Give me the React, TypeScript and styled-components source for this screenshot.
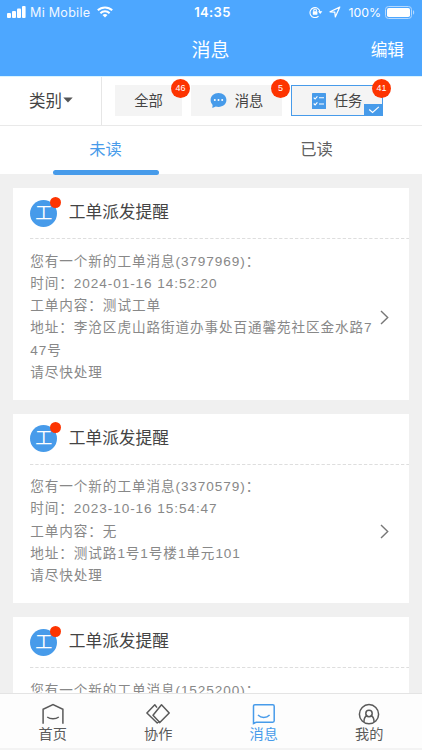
import React from "react";
import styled, { createGlobalStyle } from "styled-components";

const Global = createGlobalStyle`
  * { box-sizing: border-box; }
  body {
    margin: 0;
    background: #f0f0f0;
    font-family: "Liberation Sans", "Noto Sans CJK SC", sans-serif;
  }
`;

const blue = "#479bea";

const Screen = styled.div`
  width: 422px;
  height: 750px;
  display: flex;
  flex-direction: column;
  overflow: hidden;
  background: #f0f0f0;
`;

const Header = styled.header`
  flex: none;
  height: 76px;
  background: #4da7ff;
  color: #fff;
`;

const StatusBar = styled.div`
  height: 24px;
  display: grid;
  grid-template-columns: 1fr auto 1fr;
  align-items: center;
  padding: 0 7px;
  font-family: Inter, "Liberation Sans", sans-serif;
  font-size: 12.3px;
`;

const StatusSide = styled.div<{ $end?: boolean }>`
  display: flex;
  align-items: center;
  justify-content: ${(p) => (p.$end ? "flex-end" : "flex-start")};
`;

const Carrier = styled.span`
  margin: 0 7px 0 4px;
  font-size: 12.6px;
  letter-spacing: 0.25px;
  opacity: 0.92;
`;

const Clock = styled.span`
  font-size: 13px;
  font-weight: 600;
  letter-spacing: 0.35px;
  padding: 0 0 1px 3px;
`;

const Percent = styled.span`
  margin: 0 4px 0 7px;
`;

const TitleBar = styled.div`
  height: 52px;
  display: grid;
  grid-template-columns: 1fr auto 1fr;
  align-items: center;
  padding-right: 18px;
`;

const PageTitle = styled.h1`
  grid-column: 2;
  margin: 1px 0 0 17px;
  font-size: 19px;
  font-weight: 400;
  line-height: 28px;
`;

const EditButton = styled.button`
  justify-self: end;
  border: 0;
  padding: 0;
  margin-top: 1px;
  background: none;
  color: inherit;
  font: inherit;
  font-size: 16.7px;
  line-height: 24px;
`;

const FilterBar = styled.div`
  flex: none;
  height: 50px;
  display: flex;
  background: #fff;
  border-top: 1px solid #d9f4ff;
  border-bottom: 1px solid #e9e9e9;
`;

const Category = styled.div`
  width: 102px;
  display: flex;
  align-items: center;
  gap: 1px;
  padding: 0 0 2px 29px;
  border-right: 1px solid #e6e6e6;
  font-size: 16.5px;
  color: #444;
`;

const Chips = styled.div`
  display: flex;
  align-items: flex-start;
  gap: 9px;
  padding: 8px 0 0 13px;
`;

const Chip = styled.div<{ $width: number; $active?: boolean }>`
  position: relative;
  width: ${(p) => p.$width}px;
  height: 31px;
  display: flex;
  align-items: center;
  justify-content: center;
  background: #f4f4f4;
  border: 1px solid ${(p) => (p.$active ? blue : "#f4f4f4")};
  font-size: 14.3px;
  color: #444;
`;

const ChipLabel = styled.span`
  padding-bottom: 3px;
  svg + & { margin-left: 8px; }
`;

const CountBadge = styled.b`
  position: absolute;
  top: -7px;
  right: -9px;
  width: 19px;
  height: 19px;
  border-radius: 50%;
  background: #fd3401;
  color: #fff;
  font-size: 9px;
  font-weight: 400;
  line-height: 19px;
  text-align: center;
`;

const Corner = styled.i`
  position: absolute;
  right: -1px;
  bottom: -1px;
  width: 19px;
  height: 12px;
  display: flex;
  align-items: center;
  justify-content: center;
  background: ${blue};
`;

const Tabs = styled.div`
  flex: none;
  height: 48px;
  display: grid;
  grid-template-columns: 1fr 1fr;
  background: #fff;
`;

const Tab = styled.div<{ $active?: boolean }>`
  position: relative;
  display: flex;
  align-items: center;
  justify-content: center;
  padding-bottom: 4px;
  font-size: 16.3px;
  color: ${(p) => (p.$active ? blue : "#606060")};
`;

const Indicator = styled.i`
  position: absolute;
  left: 53px;
  bottom: -1px;
  width: 106px;
  height: 5px;
  border-radius: 3px;
  background: ${blue};
`;

const List = styled.main`
  flex: 1;
  min-height: 0;
  overflow: hidden;
  display: flex;
  flex-direction: column;
  gap: 13.7px;
  padding: 14px 13.3px 0;
`;

const Card = styled.article`
  flex: none;
  padding-left: 17px;
  background: #fff;
`;

const CardHead = styled.div`
  height: 50px;
  display: flex;
  align-items: center;
  gap: 11.5px;
`;

const Avatar = styled.div`
  position: relative;
  width: 27px;
  height: 27px;
  border-radius: 50%;
  background: ${blue};
  color: #fff;
  font-size: 17px;
  font-weight: 400;
  line-height: 27px;
  text-align: center;
`;

const UnreadDot = styled.i`
  position: absolute;
  top: -3px;
  right: -4px;
  width: 11px;
  height: 11px;
  border-radius: 50%;
  background: #fd3401;
`;

const CardTitle = styled.h2`
  margin: 0;
  font-size: 16.7px;
  line-height: 24px;
  font-weight: 400;
  color: #444;
`;

const CardBody = styled.div`
  display: flex;
  align-items: center;
  justify-content: space-between;
  padding: 11.5px 20px 16px 0;
`;

const Dashes = styled.svg`
  display: block;
  width: 100%;
  height: 1px;
`;

const Lines = styled.div`
  width: 346px;
  font-size: 13.6px;
  letter-spacing: 0.92px;
  line-height: 22.25px;
  color: #888;
`;

const Line = styled.p`
  margin: 0;
  word-break: break-all;
`;

const BottomNav = styled.nav`
  flex: none;
  height: 57px;
  display: grid;
  grid-template-columns: repeat(4, 1fr);
  background: #fdfdfd;
  border-top: 1px solid #e4e4e4;
  box-shadow: inset 0 -2px 0 #f3f3f3;
`;

const NavItem = styled.a<{ $active?: boolean }>`
  display: flex;
  flex-direction: column;
  align-items: center;
  padding-top: 9px;
  font-size: 14.2px;
  line-height: 18px;
  color: ${(p) => (p.$active ? blue : "#5a5a5a")};
`;

const Signal = () => (
  <svg width="19" height="12" viewBox="0 0 19 12" fill="#fff">
    <rect x="0" y="7" width="4" height="5" rx="1" />
    <rect x="5" y="5" width="4" height="7" rx="1" />
    <rect x="10" y="2.5" width="4" height="9.5" rx="1" />
    <rect x="15" y="0" width="3.6" height="12" rx="1" />
  </svg>
);

const Wifi = () => (
  <svg width="16" height="12" viewBox="0 0 16 12" fill="none" stroke="#fff" strokeWidth="2">
    <path d="M.8 4.3a10.4 10.4 0 0 1 14.4 0M3.4 7.2a6.6 6.6 0 0 1 9.2 0" />
    <path d="M8 11.6 5.5 9.1a3.6 3.6 0 0 1 5 0Z" fill="#fff" stroke="none" />
  </svg>
);

const LockIcon = styled.svg`
  margin-right: 6px;
`;

const RotationLock = () => (
  <LockIcon width="14" height="12" viewBox="0 0 14 12" fill="none" stroke="#fff" strokeWidth="1.1">
    <path d="M9.5 10.2A5 5 0 1 1 11 6" />
    <path d="M9 5.3h4.4L11.2 8Z" fill="#fff" stroke="none" />
    <rect x="3.8" y="5.2" width="4.6" height="3.6" rx=".5" fill="#fff" stroke="none" />
    <path d="M4.8 5.500V4.300a1.300 1.300 0 0 1 2.600 0v1.200" />
  </LockIcon>
);

const Location = () => (
  <svg width="12" height="12" viewBox="0 0 12 12" fill="none" stroke="#fff" strokeWidth="1.2" strokeLinejoin="round">
    <path d="M10.8 1.1 1 5.8l4.8.4.5 4.8Z" />
  </svg>
);

const Battery = () => (
  <svg width="30" height="13" viewBox="0 0 30 13">
    <rect x=".5" y=".5" width="26" height="12" rx="3" fill="none" stroke="#b4d9ff" />
    <rect x="2" y="2" width="23" height="9" rx="1.8" fill="#fff" />
    <path d="M28 4.3c1.6.6 1.6 3.8 0 4.4Z" fill="#b4d9ff" />
  </svg>
);

const Caret = () => (
  <svg width="10" height="6" viewBox="0 0 10 6">
    <path d="M.3.5h9.4L5 5.6Z" fill="#555" />
  </svg>
);

const Bubble = () => (
  <svg width="17" height="17" viewBox="0 0 17 17">
    <path d="M8.500 1C4 1 .6 4.100.6 8c0 2 .8 3.600 2 4.900L2.300 16l3.500-1.500c.8.300 1.700.400 2.700.400 4.500 0 7.900-3 7.900-6.900S13 1 8.500 1Z" fill={blue} />
    <circle cx="4.800" cy="8" r="1" fill="#fff" />
    <circle cx="8.500" cy="8" r="1" fill="#fff" />
    <circle cx="12.200" cy="8" r="1" fill="#fff" />
  </svg>
);

const TaskList = () => (
  <svg width="14" height="16" viewBox="0 0 14 16">
    <rect width="14" height="16" rx=".6" fill={blue} />
    <path d="m1.700 4.600 1.400 1.400 2.300-2.600M7 4.700h5M1.700 10.500l1.400 1.400 2.300-2.600M7 11h5" fill="none" stroke="#fff" strokeWidth="1.100" />
  </svg>
);

const Check = () => (
  <svg width="12" height="8" viewBox="0 0 12 8">
    <path d="m1.200 3.500 3.400 3L10.800.9" fill="none" stroke="#fff" strokeWidth="1.200" />
  </svg>
);

const Chevron = () => (
  <svg width="9" height="15" viewBox="0 0 9 15">
    <path d="m1 1 6.700 6.500L1 14" fill="none" stroke="#777" strokeWidth="1.400" />
  </svg>
);

const navIcon = {
  width: 24,
  height: 22,
  viewBox: "0 0 24 22",
  fill: "none",
  stroke: "currentColor",
  strokeWidth: 1.5,
} as const;

const HomeIcon = () => (
  <svg {...navIcon}>
    <path d="M2.100 20.800V6.200L12 1.500l9.900 4.700v14.600M6.200 14c3.200 2.300 8.400 2.300 11.600 0" />
  </svg>
);

const CoopIcon = () => (
  <svg {...navIcon}>
    <path d="m15.500 1.800 7.700 8.200-9.400 9.600L7 12.300ZM11 4.600 8.800 1.800.9 10l10.300 10 1.800-1.600" strokeLinejoin="round" />
  </svg>
);

const MessageIcon = () => (
  <svg {...navIcon}>
    <path d="M1.500 20.500V3.200c0-1 .5-1.400 1.400-1.400h17.900c1 0 1.400.5 1.400 1.400v14.600c0 1-.5 1.400-1.400 1.400H4.200ZM6 12c3.200 3.200 8.400 3.200 11.600 0" />
  </svg>
);

const ProfileIcon = () => (
  <svg {...navIcon}>
    <circle cx="12" cy="11.200" r="9.600" />
    <circle cx="12" cy="10.500" r="3.200" />
    <path d="M6.900 19c.1-3.600 1.600-5.900 3.500-6.400M17.100 19c-.1-3.600-1.600-5.900-3.500-6.400" />
  </svg>
);

const messages = [
  [
    "您有一个新的工单消息(3797969)：",
    "时间：2024-01-16 14:52:20",
    "工单内容：测试工单",
    "地址：李沧区虎山路街道办事处百通馨苑社区金水路747号",
    "请尽快处理",
  ],
  [
    "您有一个新的工单消息(3370579)：",
    "时间：2023-10-16 15:54:47",
    "工单内容：无",
    "地址：测试路1号1号楼1单元101",
    "请尽快处理",
  ],
  ["您有一个新的工单消息(1525200)："],
];

const MessageCard = ({ lines }: { lines: string[] }) => (
  <Card>
    <CardHead>
      <Avatar>
        工
        <UnreadDot />
      </Avatar>
      <CardTitle>工单派发提醒</CardTitle>
    </CardHead>
    <Dashes>
      <line x1="0" y1=".5" x2="400" y2=".5" stroke="#dedede" strokeDasharray="3.300 2" />
    </Dashes>
    <CardBody>
      <Lines>
        {lines.map((line) => (
          <Line key={line}>{line}</Line>
        ))}
      </Lines>
      {lines.length > 1 && <Chevron />}
    </CardBody>
  </Card>
);

export default function App() {
  return (
    <Screen>
      <Global />
      <Header>
        <StatusBar>
          <StatusSide>
            <Signal />
            <Carrier>Mi Mobile</Carrier>
            <Wifi />
          </StatusSide>
          <Clock>14:35</Clock>
          <StatusSide $end>
            <RotationLock />
            <Location />
            <Percent>100%</Percent>
            <Battery />
          </StatusSide>
        </StatusBar>
        <TitleBar>
          <PageTitle>消息</PageTitle>
          <EditButton>编辑</EditButton>
        </TitleBar>
      </Header>
      <FilterBar>
        <Category>
          类别
          <Caret />
        </Category>
        <Chips>
          <Chip $width={67}>
            <ChipLabel>全部</ChipLabel>
            <CountBadge>46</CountBadge>
          </Chip>
          <Chip $width={91}>
            <Bubble />
            <ChipLabel>消息</ChipLabel>
            <CountBadge>5</CountBadge>
          </Chip>
          <Chip $width={92} $active>
            <TaskList />
            <ChipLabel>任务</ChipLabel>
            <Corner>
              <Check />
            </Corner>
            <CountBadge>41</CountBadge>
          </Chip>
        </Chips>
      </FilterBar>
      <Tabs>
        <Tab $active>
          未读
          <Indicator />
        </Tab>
        <Tab>已读</Tab>
      </Tabs>
      <List>
        {messages.map((lines) => (
          <MessageCard key={lines[0]} lines={lines} />
        ))}
      </List>
      <BottomNav>
        <NavItem>
          <HomeIcon />
          首页
        </NavItem>
        <NavItem>
          <CoopIcon />
          协作
        </NavItem>
        <NavItem $active>
          <MessageIcon />
          消息
        </NavItem>
        <NavItem>
          <ProfileIcon />
          我的
        </NavItem>
      </BottomNav>
    </Screen>
  );
}
